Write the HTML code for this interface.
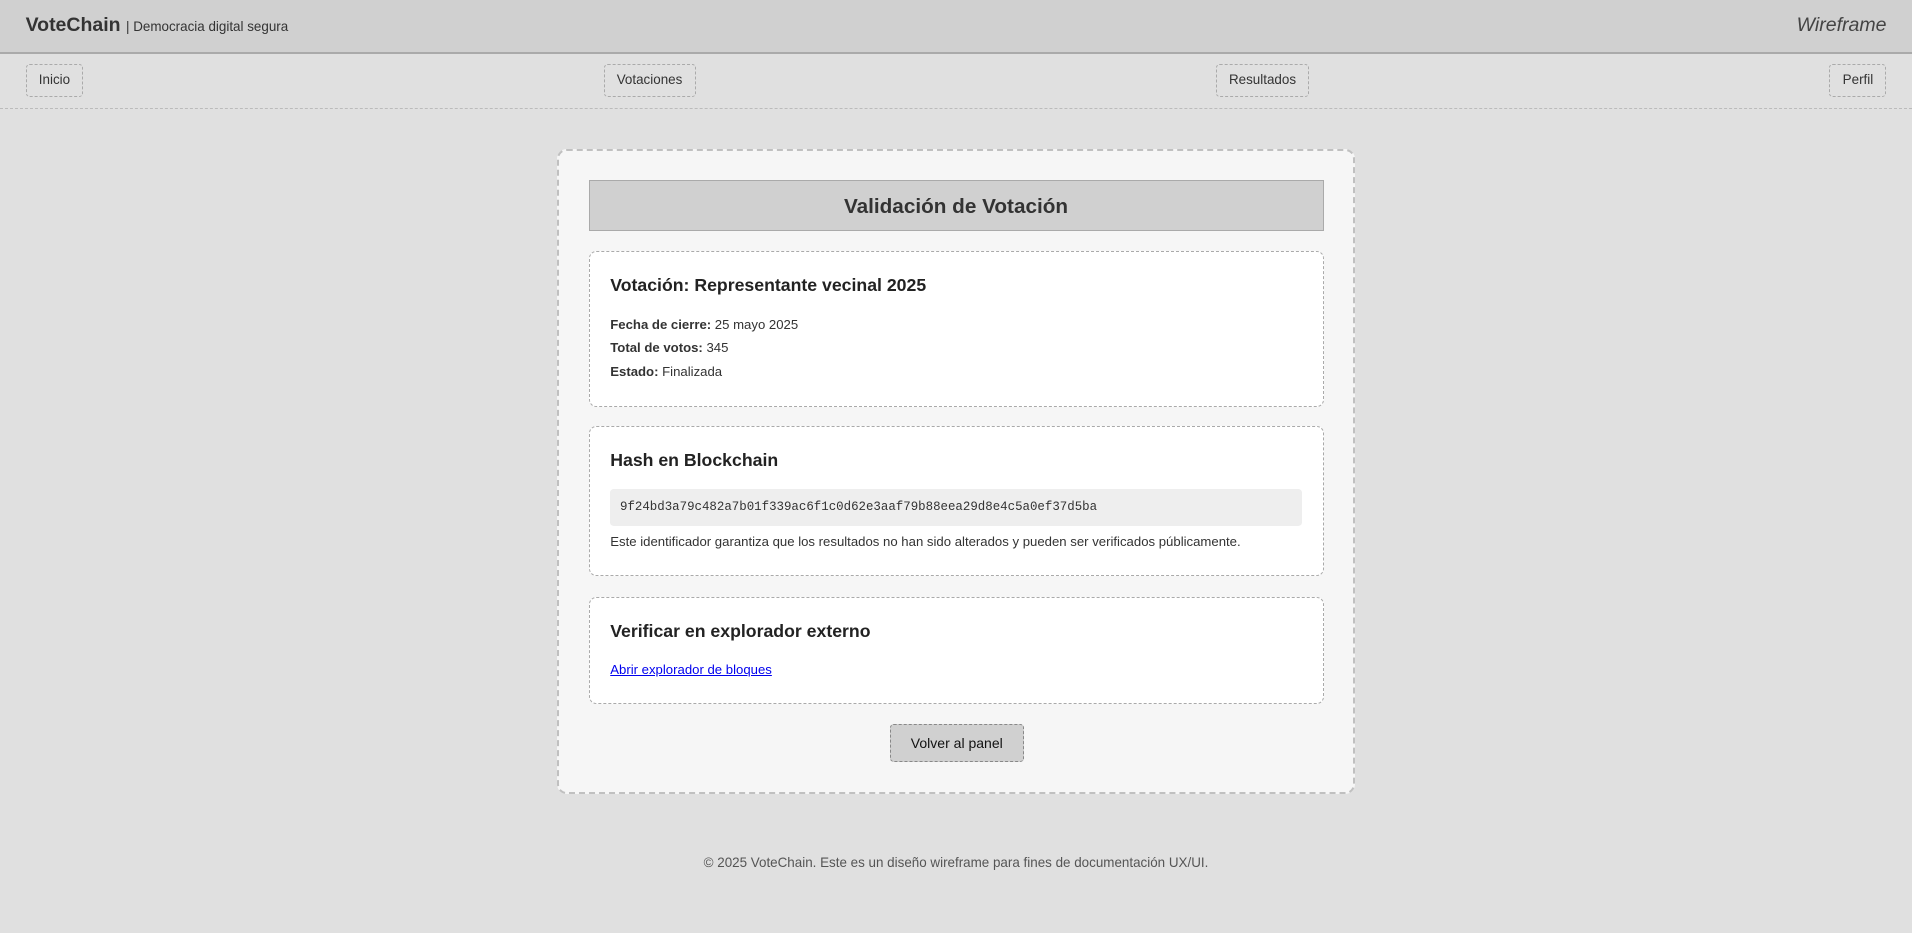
<!DOCTYPE html>
<html><head><meta charset="utf-8"><style>
html{zoom:1.2194}
*{box-sizing:border-box;margin:0;padding:0}
body{width:1568px;height:765px;background:#e0e0e0;font-family:"Liberation Sans",sans-serif;color:#333;overflow:hidden}
.hdr{height:44px;background:#d0d0d0;border-bottom:2px solid #aaa;display:flex;align-items:center;justify-content:space-between;padding:0 21px}
.hdr b{font-size:16px;color:#333}
.hdr span.sub{font-size:11px}
.hdr i{font-size:16px;color:#444}
.nav{height:45px;border-bottom:1px dashed #bbb;display:flex;align-items:center;justify-content:space-between;padding:0 21px}
.nav div{border:1px dashed #aaa;border-radius:3px;font-size:11px;padding:0 10px;height:27px;line-height:25px}
.card{position:absolute;left:457px;top:122px;width:654px;height:529px;background:#f6f6f6;border:2px dashed #c0c0c0;border-radius:8px;padding:0 24px}
.title{margin-top:24px;height:42px;background:#d0d0d0;border:1px solid #aaa;text-align:center;font-weight:bold;font-size:17px;line-height:42px}
.sec{background:#fff;border:1px dashed #aaa;border-radius:6px;padding:0 17px;margin-top:16px;position:relative}
.sec h3{font-size:14.5px;font-weight:bold;padding-top:19px;height:44px;color:#222}
.sec p{font-size:10.8px;line-height:19.5px}
.hash{background:#eee;border-radius:3px;font-family:"Liberation Mono",monospace;font-size:10.2px;padding:0 8px;height:30px;line-height:30px;margin-top:7px}
a{color:#00e;font-size:10.8px}
.btn{position:absolute;left:271px;top:470px;width:110px;height:31px;background:#d0d0d0;border:1px dashed #888;border-radius:3px;font-size:11.5px;display:flex;align-items:center;justify-content:center;color:#111}
.foot{position:absolute;top:701px;width:1568px;text-align:center;font-size:11px;color:#555}
</style></head><body>
<div class="hdr"><div><b>VoteChain</b> <span class="sub">| Democracia digital segura</span></div><i>Wireframe</i></div>
<div class="nav"><div>Inicio</div><div>Votaciones</div><div>Resultados</div><div>Perfil</div></div>
<div class="card">
<div class="title">Validación de Votación</div>
<div class="sec" style="height:128px"><h3>Votación: Representante vecinal 2025</h3>
<p style="margin-top:6px"><b>Fecha de cierre:</b> 25 mayo 2025</p><p><b>Total de votos:</b> 345</p><p><b>Estado:</b> Finalizada</p></div>
<div class="sec" style="height:123px"><h3>Hash en Blockchain</h3>
<div class="hash">9f24bd3a79c482a7b01f339ac6f1c0d62e3aaf79b88eea29d8e4c5a0ef37d5ba</div>
<p style="margin-top:3px">Este identificador garantiza que los resultados no han sido alterados y pueden ser verificados públicamente.</p></div>
<div class="sec" style="height:88px;margin-top:17px"><h3>Verificar en explorador externo</h3>
<p style="margin-top:5px"><a href="#">Abrir explorador de bloques</a></p></div>
<div class="btn">Volver al panel</div>
</div>
<div class="foot">© 2025 VoteChain. Este es un diseño wireframe para fines de documentación UX/UI.</div>
</body></html>
